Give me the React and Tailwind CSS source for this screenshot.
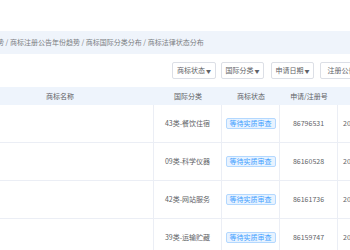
const font = { fontFamily: '"Noto Sans CJK SC", "Noto Sans", sans-serif' };

const rows = [
  { cls: "43类-餐饮住宿", no: "86796531", date: "2022-09-27" },
  { cls: "09类-科学仪器", no: "86160528", date: "2022-08-05" },
  { cls: "42类-网站服务", no: "86161736", date: "2022-08-05" },
  { cls: "39类-运输贮藏", no: "86159747", date: "2022-08-05" },
];

const filters = ["商标状态", "国际分类", "申请日期", "注册公告"];

function Caret() {
  return <span className="ml-[1px] text-[5px] leading-none">▼</span>;
}

export default function App() {
  return (
    <div
      className="w-[350px] h-[250px] overflow-hidden bg-white text-[#606266] text-[7px] leading-none"
      style={font}
    >
      <div className="h-[31px]" />
      <div className="h-[23px] bg-[#eff4fb] flex items-center whitespace-nowrap">
        <span className="ml-[-10px] text-[#7a7d82]">
          趋势 / 商标注册公告年份趋势 / 商标国际分类分布 / 商标法律状态分布
        </span>
      </div>

      <div className="h-[33px] flex items-center whitespace-nowrap">
        <div className="ml-[172px] flex gap-[5px]">
          {filters.map((f, i) => (
            <div
              key={f}
              className={`h-[17px] ${i === 0 ? "w-[44px]" : "w-[43px]"} shrink-0 border border-[#dcdfe6] rounded-[2px] flex items-center justify-center ${i === 2 ? "ml-[2px]" : ""} ${i === 3 ? "ml-[1px]" : ""}`}
            >
              {f}
              {i < 3 && <Caret />}
            </div>
          ))}
        </div>
      </div>

      <div className="ml-[-34px] w-[420px]">
        <div className="grid grid-cols-[188px_68px_58px_58px_48px] h-[18px] bg-[#eef4fc] items-center text-center whitespace-nowrap">
          <div>商标名称</div>
          <div>国际分类</div>
          <div>商标状态</div>
          <div>申请/注册号</div>
          <div />
        </div>
        {rows.map((r) => (
          <div
            key={r.no}
            className="grid grid-cols-[188px_68px_58px_58px_48px] h-[38px] border-b border-[#ebeef5] text-center whitespace-nowrap"
          >
            <div className="border-r border-[#ebeef5]" />
            <div className="border-r border-[#ebeef5] flex items-center justify-center">{r.cls}</div>
            <div className="border-r border-[#ebeef5] flex items-center justify-center">
              <span className="px-[3px] h-[11px] flex items-center bg-[#e8f3ff] border border-[#b3d8ff] rounded-[2px] text-[#409eff]">
                等待实质审查
              </span>
            </div>
            <div className="border-r border-[#ebeef5] flex items-center justify-center">{r.no}</div>
            <div className="flex items-center justify-start pl-[5px]">{r.date}</div>
          </div>
        ))}
      </div>
    </div>
  );
}
